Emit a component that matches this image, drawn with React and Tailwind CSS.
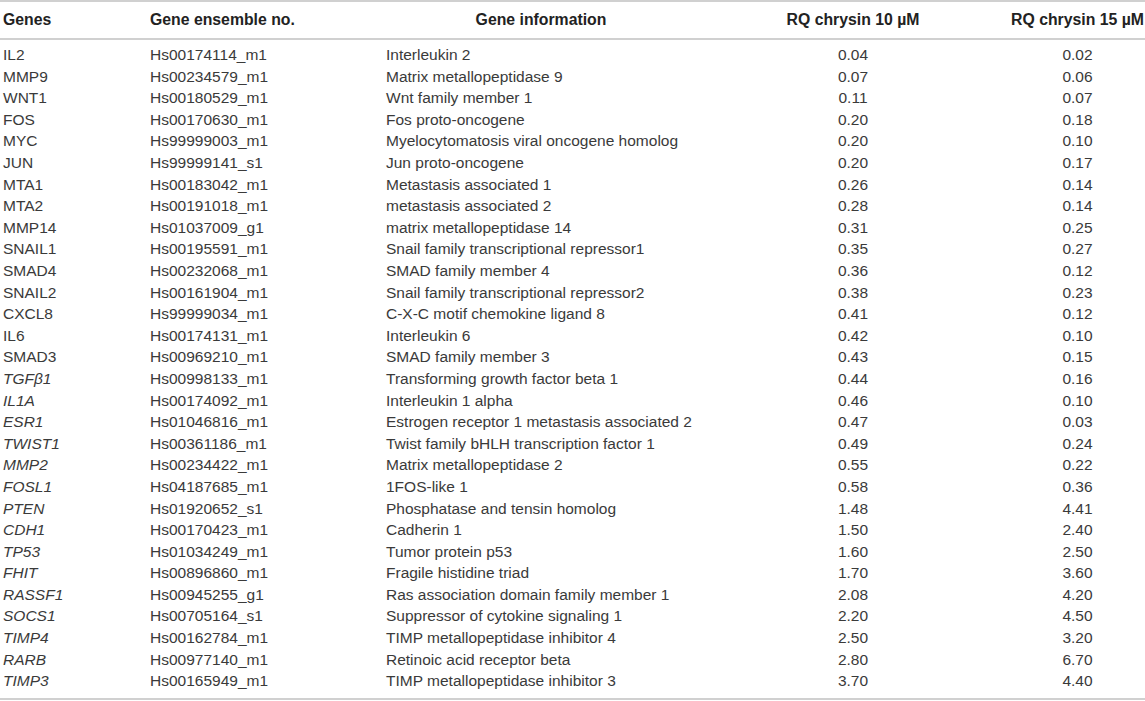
import React from "react";

const rows = [
  ["IL2", "Hs00174114_m1", "Interleukin 2", "0.04", "0.02", false],
  ["MMP9", "Hs00234579_m1", "Matrix metallopeptidase 9", "0.07", "0.06", false],
  ["WNT1", "Hs00180529_m1", "Wnt family member 1", "0.11", "0.07", false],
  ["FOS", "Hs00170630_m1", "Fos proto-oncogene", "0.20", "0.18", false],
  ["MYC", "Hs99999003_m1", "Myelocytomatosis viral oncogene homolog", "0.20", "0.10", false],
  ["JUN", "Hs99999141_s1", "Jun proto-oncogene", "0.20", "0.17", false],
  ["MTA1", "Hs00183042_m1", "Metastasis associated 1", "0.26", "0.14", false],
  ["MTA2", "Hs00191018_m1", "metastasis associated 2", "0.28", "0.14", false],
  ["MMP14", "Hs01037009_g1", "matrix metallopeptidase 14", "0.31", "0.25", false],
  ["SNAIL1", "Hs00195591_m1", "Snail family transcriptional repressor1", "0.35", "0.27", false],
  ["SMAD4", "Hs00232068_m1", "SMAD family member 4", "0.36", "0.12", false],
  ["SNAIL2", "Hs00161904_m1", "Snail family transcriptional repressor2", "0.38", "0.23", false],
  ["CXCL8", "Hs99999034_m1", "C-X-C motif chemokine ligand 8", "0.41", "0.12", false],
  ["IL6", "Hs00174131_m1", "Interleukin 6", "0.42", "0.10", false],
  ["SMAD3", "Hs00969210_m1", "SMAD family member 3", "0.43", "0.15", false],
  ["TGFβ1", "Hs00998133_m1", "Transforming growth factor beta 1", "0.44", "0.16", true],
  ["IL1A", "Hs00174092_m1", "Interleukin 1 alpha", "0.46", "0.10", true],
  ["ESR1", "Hs01046816_m1", "Estrogen receptor 1 metastasis associated 2", "0.47", "0.03", true],
  ["TWIST1", "Hs00361186_m1", "Twist family bHLH transcription factor 1", "0.49", "0.24", true],
  ["MMP2", "Hs00234422_m1", "Matrix metallopeptidase 2", "0.55", "0.22", true],
  ["FOSL1", "Hs04187685_m1", "1FOS-like 1", "0.58", "0.36", true],
  ["PTEN", "Hs01920652_s1", "Phosphatase and tensin homolog", "1.48", "4.41", true],
  ["CDH1", "Hs00170423_m1", "Cadherin 1", "1.50", "2.40", true],
  ["TP53", "Hs01034249_m1", "Tumor protein p53", "1.60", "2.50", true],
  ["FHIT", "Hs00896860_m1", "Fragile histidine triad", "1.70", "3.60", true],
  ["RASSF1", "Hs00945255_g1", "Ras association domain family member 1", "2.08", "4.20", true],
  ["SOCS1", "Hs00705164_s1", "Suppressor of cytokine signaling 1", "2.20", "4.50", true],
  ["TIMP4", "Hs00162784_m1", "TIMP metallopeptidase inhibitor 4", "2.50", "3.20", true],
  ["RARB", "Hs00977140_m1", "Retinoic acid receptor beta", "2.80", "6.70", true],
  ["TIMP3", "Hs00165949_m1", "TIMP metallopeptidase inhibitor 3", "3.70", "4.40", true],
];

// column widths read off the picture
const cols = "grid grid-cols-[150px_236px_310px_314px_135px]";

export default function App() {
  return (
    <div className="w-[1145px] h-[701px] bg-white text-[#3a3a3a] font-['Liberation_Sans',Arial,sans-serif] text-[15.5px]">
      {/* header */}
      <div className={`${cols} h-[40px] items-center border-y-2 border-[#d0d0d0] font-bold text-[15.8px] text-[#222]`}>
        <div className="pl-[3px]">Genes</div>
        <div>Gene ensemble no.</div>
        <div className="text-center">Gene information</div>
        <div className="text-center">RQ chrysin 10 µM</div>
        <div className="text-center">RQ chrysin 15 µM</div>
      </div>

      {/* body */}
      <div className="pt-[4px] pb-[6px] border-b-2 border-[#d0d0d0]">
        {rows.map(([gene, ens, info, rq10, rq15, italic]) => (
          <div key={gene} className={`${cols} h-[21.6px] items-center leading-none`}>
            <div className={`pl-[3px] ${italic ? "italic" : ""}`}>{gene}</div>
            <div>{ens}</div>
            <div>{info}</div>
            <div className="text-center">{rq10}</div>
            <div className="text-center">{rq15}</div>
          </div>
        ))}
      </div>
    </div>
  );
}
